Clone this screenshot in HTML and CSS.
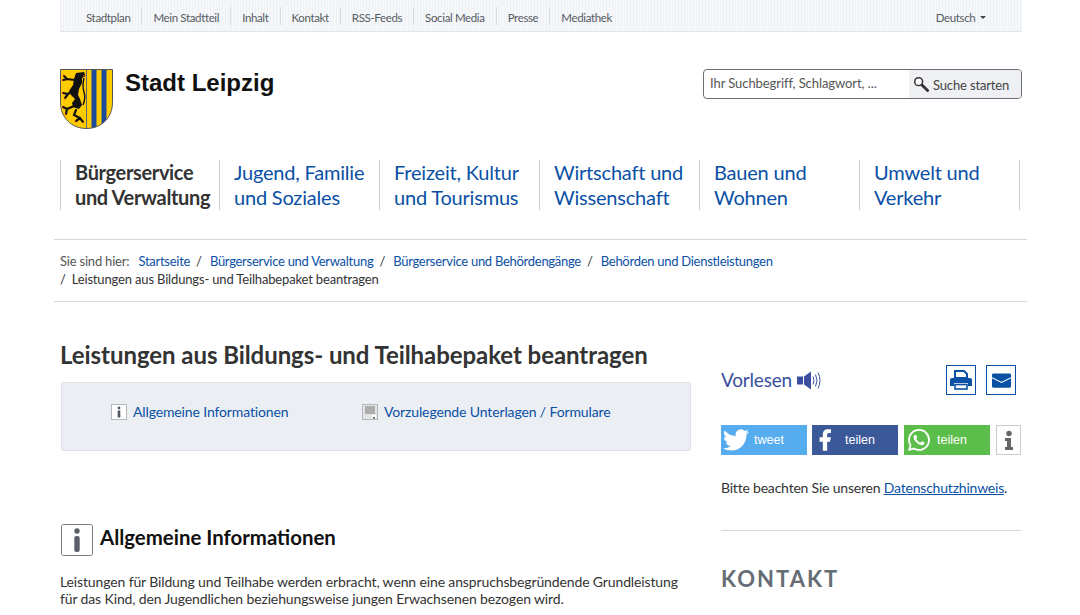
FILE: index.html
```html
<!DOCTYPE html>
<html lang="de">
<head>
<meta charset="utf-8">
<title>Leistungen aus Bildungs- und Teilhabepaket beantragen</title>
<link rel="stylesheet" href="styles.css">
</head>
<body>
<div class="topbar">
  <nav class="meta">
    <a>Stadtplan</a><a>Mein Stadtteil</a><a>Inhalt</a><a>Kontakt</a><a>RSS-Feeds</a><a>Social Media</a><a>Presse</a><a>Mediathek</a>
  </nav>
  <div class="lang">Deutsch <span class="caret"></span></div>
</div>
<header class="brand">
  <div class="logo">
    <svg class="shield" width="53" height="60" viewBox="0 0 53 60">
      <defs><clipPath id="sc"><path d="M.5.5h52v33c0 15-11 26-26 26S.5 48.500.5 33.500z"/></clipPath></defs>
      <g clip-path="url(#sc)">
        <rect width="53" height="60" fill="#fc0"/>
        <rect x="31.500" width="5" height="60" fill="#1c4a9c"/>
        <rect x="41.500" width="5" height="60" fill="#1c4a9c"/>
      </g>
      <path d="M26.500 .5v59" stroke="#666" stroke-width="1"/>
      <path d="M24 9q-2 8 0 14t-1 13" fill="none" stroke="#111" stroke-width="1.400"/>
      <path d="M16 4L24 3l1.500 4-3.500 2v5l-3 6-1 6 2 4 2 6-3 4-6-2-1-4 3-4-4-4-2-4 4-6 1-6z" fill="#111"/>
      <path d="M15 11L7 10 4 7M8 10L3 11M15 20L8 25 3 24M8 25l-3 4M14 37L7 40 3 38M7 40l-1 5M16 41l-2 5 6 3 3 4M20 49l-4 3" fill="none" stroke="#111" stroke-width="2.200" stroke-linecap="round"/>
      <path d="M3 6l1 1M2 11l1 0M2 24l1 0M4 30l1-1M2 38l1 0M5 46l1-1M23 54l0-1M15 53l1-1" stroke="#d93a25" stroke-width="1.600"/>
      <path d="M23 7l2-.5" stroke="#d93a25" stroke-width="1"/>
      <path d="M.5.5h52v33c0 15-11 26-26 26S.5 48.500.5 33.500z" fill="none" stroke="#555" stroke-width="1"/>
    </svg>
    <span class="city">Stadt Leipzig</span>
  </div>
  <form class="search">
    <span class="placeholder">Ihr Suchbegriff, Schlagwort, ...</span>
    <span class="search-btn">
      <svg width="16" height="16" viewBox="0 0 17 17"><circle cx="6" cy="6" r="4.200" fill="#fff" stroke="#333" stroke-width="1.600"/><path d="M9.500 9.500l6 6" stroke="#333" stroke-width="3" stroke-linecap="round"/></svg>
      <span class="search-label">Suche starten</span>
    </span>
  </form>
</header>
<nav class="mainnav">
  <a class="active">Bürgerservice<br>und Verwaltung</a>
  <a>Jugend, Familie<br>und Soziales</a>
  <a>Freizeit, Kultur<br>und Tourismus</a>
  <a>Wirtschaft und<br>Wissenschaft</a>
  <a>Bauen und<br>Wohnen</a>
  <a>Umwelt und<br>Verkehr</a>
</nav>
<div class="crumbs">
  <span class="here">Sie sind hier:</span>
  <a>Startseite</a><span class="sep">/</span>
  <a>Bürgerservice und Verwaltung</a><span class="sep">/</span>
  <a>Bürgerservice und Behördengänge</a><span class="sep">/</span>
  <a>Behörden und Dienstleistungen</a><br>
  <span class="sep first">/</span><span class="current">Leistungen aus Bildungs- und Teilhabepaket beantragen</span>
</div>
<div class="page">
  <main class="content">
    <h1>Leistungen aus Bildungs- und Teilhabepaket beantragen</h1>
    <div class="toc">
      <a class="toc-item">
        <svg width="16" height="16" viewBox="0 0 16 16"><rect x=".5" y=".5" width="15" height="15" fill="#fff" stroke="#b5b9bd"/><circle cx="8" cy="4" r="1.400" fill="#4f5560"/><rect x="6.700" y="6.500" width="2.600" height="7" fill="#4f5560"/></svg>
        Allgemeine Informationen
      </a>
      <a class="toc-item">
        <svg width="16" height="16" viewBox="0 0 16 16"><rect x=".5" y=".5" width="15" height="15" fill="#e3e3e3" stroke="#b5b9bd"/><path d="M3 3h10M3 5h10M3 7h10M3 9h10" stroke="#777"/><path d="M10 11h4v3h-4z" fill="#fff"/><rect x="11" y="13" width="2" height="1.500" fill="#555"/></svg>
        Vorzulegende Unterlagen / Formulare
      </a>
    </div>
    <h2>
      <svg width="32" height="32" viewBox="0 0 32 32"><rect x=".5" y=".5" width="31" height="31" rx="2" fill="#fff" stroke="#777c83"/><circle cx="16" cy="7" r="2.700" fill="#5a5f69"/><rect x="13.300" y="12" width="5.400" height="16" rx="2" fill="#5a5f69"/></svg>
      <span class="h2-label">Allgemeine Informationen</span>
    </h2>
    <p>Leistungen für Bildung und Teilhabe werden erbracht, wenn eine anspruchsbegründende Grundleistung für das Kind, den Jugendlichen beziehungsweise jungen Erwachsenen bezogen wird.</p>
  </main>
  <aside class="side">
    <div class="tools">
      <a class="vorlesen">Vorlesen
        <svg width="25" height="21" viewBox="0 0 25 20"><rect x="0" y="6" width="6" height="8" fill="#3a4f9f"/><path d="M7 6l7-5v18l-7-5z" fill="#3a4f9f"/><path d="M16 6q2 4 0 8M18.500 4q3 6 0 12M21 2q4 8 0 16" fill="none" stroke="#3a4f9f"/></svg>
      </a>
      <div class="tool-btns">
        <a class="tool-btn"><svg width="22" height="20" viewBox="0 0 22 20"><path d="M5 1h9l3 3v4H5z" fill="#fff" stroke="#0a50a5" stroke-width="2"/><path d="M2 8h18a2 2 0 012 2v6h-4v-3H4v3H0v-6a2 2 0 012-2z" fill="#0a50a5"/><rect x="5" y="14.500" width="12" height="4.500" fill="#fff" stroke="#0a50a5" stroke-width="1.600"/></svg></a>
        <a class="tool-btn"><svg width="19" height="15" viewBox="0 0 20 15"><rect width="20" height="15" rx="1.500" fill="#0a50a5"/><path d="M0 4.500l10 5 10-5" fill="none" stroke="#fff" stroke-width="1.200"/></svg></a>
      </div>
    </div>
    <div class="share">
      <a class="sbtn tw"><svg class="tw-i" width="26" height="26" viewBox="0 0 24 24"><path fill="#fff" d="M23.953 4.570a10 10 0 01-2.825.775 4.958 4.958 0 002.163-2.723c-.951.555-2.005.959-3.127 1.184a4.920 4.920 0 00-8.384 4.482C7.690 8.095 4.067 6.130 1.640 3.162a4.822 4.822 0 00-.666 2.475c0 1.710.870 3.213 2.188 4.096a4.904 4.904 0 01-2.228-.616v.060a4.923 4.923 0 003.946 4.827 4.996 4.996 0 01-2.212.085 4.936 4.936 0 004.604 3.417 9.867 9.867 0 01-6.102 2.105c-.390 0-.779-.023-1.170-.067a13.995 13.995 0 007.557 2.209c9.053 0 13.998-7.496 13.998-13.985 0-.210 0-.420-.015-.630A9.935 9.935 0 0024 4.590z"/></svg><span>tweet</span></a>
      <a class="sbtn fb"><svg class="fb-i" width="26" height="26" viewBox="0 0 24 24"><path fill="#fff" d="M14 13.500h2.500l1-4H14v-2c0-1.030 0-2 2-2h1.500V2.140c-.326-.043-1.557-.14-2.857-.14C11.928 2 10 3.657 10 6.700v2.800H7v4h3V22h4v-8.500z"/></svg><span>teilen</span></a>
      <a class="sbtn wa"><svg class="wa-i" width="22" height="22" viewBox="0 0 24 24"><path fill="#fff" d="M17.472 14.382c-.297-.149-1.758-.867-2.030-.967-.273-.099-.471-.148-.670.150-.197.297-.767.966-.940 1.164-.173.199-.347.223-.644.075-.297-.150-1.255-.463-2.390-1.475-.883-.788-1.480-1.761-1.653-2.059-.173-.297-.018-.458.130-.606.134-.133.298-.347.446-.520.149-.174.198-.298.298-.497.099-.198.050-.371-.025-.520-.075-.149-.669-1.612-.916-2.207-.242-.579-.487-.500-.669-.510-.173-.008-.371-.010-.570-.010-.198 0-.520.074-.792.372-.272.297-1.040 1.016-1.040 2.479 0 1.462 1.065 2.875 1.213 3.074.149.198 2.096 3.200 5.077 4.487.709.306 1.262.489 1.694.625.712.227 1.360.195 1.871.118.571-.085 1.758-.719 2.006-1.413.248-.694.248-1.289.173-1.413-.074-.124-.272-.198-.570-.347m-5.421 7.403h-.004a9.870 9.870 0 01-5.031-1.378l-.361-.214-3.741.982.998-3.648-.235-.374a9.860 9.860 0 01-1.510-5.260c.001-5.450 4.436-9.884 9.888-9.884 2.640 0 5.122 1.030 6.988 2.898a9.825 9.825 0 012.893 6.994c-.003 5.450-4.437 9.884-9.885 9.884m8.413-18.297A11.815 11.815 0 0012.050 0C5.495 0 .160 5.335.157 11.892c0 2.096.547 4.142 1.588 5.945L.057 24l6.305-1.654a11.882 11.882 0 005.683 1.448h.005c6.554 0 11.890-5.335 11.893-11.893a11.821 11.821 0 00-3.480-8.413z"/></svg><span>teilen</span></a>
      <a class="sinfo"><svg width="10" height="20" viewBox="0 0 10 20"><circle cx="5" cy="3.500" r="2.700" fill="#666"/><path d="M1 8h6v9h2v3H1v-3h2v-6H1z" fill="#666"/></svg></a>
    </div>
    <p class="privacy">Bitte beachten Sie unseren <a>Datenschutzhinweis</a>.</p>
    <div class="kontakt">KONTAKT</div>
  </aside>
</div>
</body>
</html>
```
FILE: styles.css
```css
* { box-sizing: border-box; }
html, body { margin: 0; height: 615px; overflow: hidden; }
body {
  background: #fff;
  color: #333;
  font-family: "Lato", "Noto Sans", sans-serif;
  font-size: 14px;
  line-height: 18px;
  letter-spacing: -0.13px;
}
a { color: #0a50a5; text-decoration: none; }

.topbar {
  margin: 0 58px 0 60px;
  height: 32px;
  display: flex;
  justify-content: space-between;
  background: repeating-linear-gradient(90deg, #eef1f5 0, #eef1f5 1px, #f5f7f9 1px, #f5f7f9 3px);
  border-bottom: 1px solid #e2e6ea;
  padding: 7px 36px 0 15px;
  font-size: 11.500px;
  letter-spacing: -0.36px;
}
.meta { display: flex; height: 18px; }
.meta a { color: #555b63; padding: 2px 11px 0; border-right: 1px solid #d9dde2; white-space: nowrap; }
.meta a:last-child { border-right: 0; }
.lang { color: #555b63; padding-top: 2px; }
.caret {
  display: inline-block;
  margin: 0 0 3px 2px;
  border: 3px solid transparent;
  border-top-color: #444;
  border-bottom: 0;
}

.brand {
  margin: 37px 58px 0 60px;
  height: 60px;
  display: flex;
  justify-content: space-between;
  align-items: flex-start;
}
.logo { display: flex; gap: 12px; align-items: flex-start; }
.city {
  font-family: "Liberation Sans", sans-serif;
  font-weight: 700;
  font-size: 24px;
  line-height: 28px;
  letter-spacing: 0;
  color: #111;
}
.search {
  width: 319px;
  height: 30px;
  border: 1px solid #6a6f75;
  border-radius: 4px;
  display: flex;
  overflow: hidden;
  justify-content: space-between;
  font-size: 13px;
  letter-spacing: -0.08px;
}
.placeholder { padding: 4px 0 0 6px; color: #555; }
.search-btn {
  width: 112px;
  background: #eef0f3;
  display: flex;
  gap: 4px;
  align-items: center;
  padding-left: 4px;
  color: #444;
}
.search-label { padding-top: 2px; letter-spacing: -0.15px; }

.mainnav {
  margin: 31px 0 0 60px;
  display: flex;
  width: fit-content;
  border-right: 1px solid #ccc;
}
.mainnav a {
  width: 160px;
  height: 50px;
  padding-left: 14px;
  border-left: 1px solid #ccc;
  font-size: 20px;
  line-height: 25px;
  letter-spacing: -0.2px;
  white-space: nowrap;
}
.mainnav .active { width: 159px; color: #333; font-weight: 700; letter-spacing: -0.35px; }

.crumbs {
  margin: 29px 53px 0 54px;
  border-top: 1px solid #d6d6d6;
  border-bottom: 1px solid #d6d6d6;
  padding: 12px 6px 12px;
  height: 63px;
  font-size: 13px;
  letter-spacing: -0.2px;
  color: #555;
}
.crumbs a { letter-spacing: -0.28px; }
.here { margin-right: 6px; }
.sep { margin: 0 5px 0 6px; color: #333; }
.sep.first { margin-left: 0; margin-right: 6px; }
.current { color: #333; letter-spacing: -0.16px; }

.page {
  margin: 0 59px 0 60px;
  display: flex;
  gap: 30px;
}
.content { width: 631px; flex: none; }
.side { width: 300px; flex: none; padding-top: 63px; }
h1 {
  margin: 38px 0 0;
  font-size: 24px;
  line-height: 30px;
  font-weight: 700;
  letter-spacing: -0.06px;
  color: #333;
}
.toc {
  margin: 12px 0 0 1px;
  height: 69px;
  background: #ebeff3;
  border: 1px solid #dde2e7;
  border-radius: 2px;
  display: flex;
  padding: 21px 0 0 49px;
}
.toc-item { width: 251px; display: flex; gap: 6px; align-items: center; height: 16px; white-space: nowrap; }
h2 {
  margin: 73px 0 0 1px;
  display: flex;
  gap: 7px;
  align-items: flex-start;
  font-size: 20.400px;
  line-height: 26px;
  letter-spacing: 0;
  color: #111;
}
.content p { margin: 17px 0 0; line-height: 17px; color: #333; }

.tools { display: flex; justify-content: space-between; align-items: center; height: 30px; padding-right: 5px; }
.vorlesen { color: #3a4f9f; font-size: 19px; letter-spacing: -0.2px; display: flex; gap: 5px; align-items: center; }
.tool-btns { display: flex; gap: 10px; }
.tool-btn { width: 30px; height: 30px; border: 1px solid #0a50a5; display: flex; align-items: center; justify-content: center; }

.share { margin-top: 30px; display: flex; gap: 5px; height: 30px; }
.sbtn {
  width: 86px;
  height: 30px;
  color: #fff;
  font-family: "Liberation Sans", sans-serif;
  font-size: 12.500px;
  letter-spacing: 0;
  display: flex;
  align-items: center;
}
.tw { background: #55acee; }
.fb { background: #3b5998; }
.wa { background: #5cbe4a; margin-left: 1px; }
.tw-i { margin-left: 2px; margin-right: 5px; }
.fb-i { margin-left: 0; margin-right: 7px; }
.wa-i { margin-left: 4px; margin-right: 7px; }
.sinfo {
  width: 25px;
  height: 30px;
  margin-left: 1px;
  border: 1px solid #ccc;
  display: flex;
  align-items: center;
  justify-content: center;
}
.privacy { margin: 0; padding: 24px 0 33px; border-bottom: 1px solid #d6d6d6; letter-spacing: -0.2px; }
.privacy a { text-decoration: underline; }
.kontakt {
  margin-top: 33px;
  font-size: 22px;
  line-height: 30px;
  font-weight: 700;
  letter-spacing: 2px;
  color: #666c75;
}
```
